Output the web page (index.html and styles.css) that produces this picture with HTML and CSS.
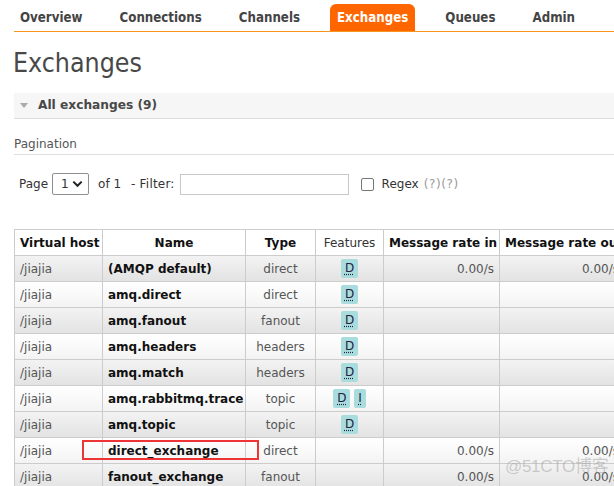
FILE: index.html
```html
<!DOCTYPE html>
<html>
<head>
<meta charset="utf-8">
<link rel="stylesheet" href="styles.css">
</head>
<body>
<div class="page">
  <nav class="tabs">
    <a class="tab">Overview</a>
    <a class="tab">Connections</a>
    <a class="tab">Channels</a>
    <a class="tab active">Exchanges</a>
    <a class="tab">Queues</a>
    <a class="tab">Admin</a>
  </nav>

  <h1 class="title">Exchanges</h1>

  <div class="section-bar"><span class="tri"></span>All exchanges (9)</div>

  <h3 class="sub">Pagination</h3>

  <div class="pager">
    <span>Page</span>
    <span class="select">1<svg width="11" height="8" viewBox="0 0 11 8"><path d="M1.3 1.6 L5.5 5.8 L9.7 1.6" fill="none" stroke="#222" stroke-width="2"/></svg></span>
    <span class="of">of 1</span>
    <span class="filter">- Filter:</span>
    <span class="input"></span>
    <span class="check"></span>
    <span class="regex">Regex</span>
    <span class="help">(?)(?)</span>
  </div>

  <table class="list">
    <colgroup>
      <col class="c1"><col class="c2"><col class="c3"><col class="c4"><col class="c5"><col class="c6">
    </colgroup>
    <thead>
      <tr>
        <th class="l">Virtual host</th>
        <th>Name</th>
        <th>Type</th>
        <th class="norm">Features</th>
        <th>Message rate in</th>
        <th>Message rate out</th>
      </tr>
    </thead>
    <tbody>
      <tr class="alt1"><td>/jiajia</td><td class="name">(AMQP default)</td><td class="c">direct</td><td class="c"><abbr class="badge">D</abbr></td><td class="r">0.00/s</td><td class="r">0.00/s</td></tr>
      <tr class="alt2"><td>/jiajia</td><td class="name">amq.direct</td><td class="c">direct</td><td class="c"><abbr class="badge">D</abbr></td><td></td><td></td></tr>
      <tr class="alt1"><td>/jiajia</td><td class="name">amq.fanout</td><td class="c">fanout</td><td class="c"><abbr class="badge">D</abbr></td><td></td><td></td></tr>
      <tr class="alt2"><td>/jiajia</td><td class="name">amq.headers</td><td class="c">headers</td><td class="c"><abbr class="badge">D</abbr></td><td></td><td></td></tr>
      <tr class="alt1"><td>/jiajia</td><td class="name">amq.match</td><td class="c">headers</td><td class="c"><abbr class="badge">D</abbr></td><td></td><td></td></tr>
      <tr class="alt2"><td>/jiajia</td><td class="name">amq.rabbitmq.trace</td><td class="c">topic</td><td class="c"><abbr class="badge">D</abbr> <abbr class="badge">I</abbr></td><td></td><td></td></tr>
      <tr class="alt1"><td>/jiajia</td><td class="name">amq.topic</td><td class="c">topic</td><td class="c"><abbr class="badge">D</abbr></td><td></td><td></td></tr>
      <tr class="alt2"><td>/jiajia</td><td class="name">direct_exchange</td><td class="c">direct</td><td class="c"></td><td class="r">0.00/s</td><td class="r">0.00/s</td></tr>
      <tr class="alt1"><td>/jiajia</td><td class="name">fanout_exchange</td><td class="c">fanout</td><td class="c"></td><td class="r">0.00/s</td><td class="r">0.00/s</td></tr>
    </tbody>
  </table>

  <div class="redbox"></div>
  <div class="watermark">@51CTO博客</div>
</div>
</body>
</html>
```

FILE: styles.css
```css
html, body {
  margin: 0;
  padding: 0;
  overflow: hidden;
  background: #fff;
}
body {
  width: 614px;
  height: 486px;
  font-family: "DejaVu Sans", Verdana, sans-serif;
  font-size: 12px;
  color: #484848;
}
.page {
  position: relative;
  width: 614px;
  height: 486px;
  overflow: hidden;
}

/* nav */
.tabs {
  display: flex;
  gap: 23px;
  margin: 0 0 0 14px;
  padding-top: 4px;
  border-bottom: 1px solid #f7941d;
}
.tab {
  display: block;
  padding: 0 7px;
  height: 27px;
  line-height: 27px;
  font-family: "DejaVu Sans Condensed", "Liberation Sans", sans-serif;
  font-weight: bold;
  font-size: 13.2px;
  color: #444;
  border-radius: 6px 6px 0 0;
}
.tab:first-child { margin-left: -1px; }
.tab.active {
  background: #ff6600;
  color: #fff;
}

/* title */
.title {
  margin: 16px 0 0 13px;
  font-family: "DejaVu Sans Condensed", "DejaVu Sans", sans-serif;
  font-weight: normal;
  font-size: 26.5px;
  line-height: 30px;
  color: #484848;
}

.section-bar {
  margin: 15px 0 0 14px;
  height: 25px;
  line-height: 25px;
  background: #f6f6f6;
  border-bottom: 1px solid #dddddd;
  font-weight: bold;
  font-size: 12.2px;
  color: #484848;
  display: flex;
  align-items: center;
}
.tri {
  width: 0;
  height: 0;
  margin: 0 10px 0 6px;
  border-left: 4.5px solid transparent;
  border-right: 4.5px solid transparent;
  border-top: 5px solid #aaaaaa;
}

.sub {
  margin: 18px 0 0 14px;
  padding-bottom: 2px;
  line-height: 15px;
  font-size: 12px;
  font-weight: normal;
  color: #555;
  border-bottom: 1px solid #dddddd;
}

.pager {
  margin: 18px 0 0 19px;
  height: 22px;
  display: flex;
  align-items: center;
  color: #333;
}
.select {
  margin-left: 4px;
  width: 37px;
  height: 22px;
  border: 1px solid #8f8f8f;
  border-radius: 2px;
  display: flex;
  align-items: center;
  justify-content: space-between;
  padding: 0 5px 0 8px;
  box-sizing: border-box;
}
.of { margin-left: 9px; }
.filter { margin-left: 10px; letter-spacing: 0.2px; }
.input {
  margin-left: 5px;
  width: 169px;
  height: 21px;
  border: 1px solid #c8c8c8;
  box-sizing: border-box;
}
.check {
  margin: 0 8px 0 12px;
  width: 13px;
  height: 13px;
  border: 1px solid #767676;
  border-radius: 2px;
  box-sizing: border-box;
}
.help {
  margin-left: 5px;
  color: #999;
  letter-spacing: 0.6px;
}

/* table */
.list {
  margin: 34px 0 0 14px;
  border-collapse: collapse;
  table-layout: fixed;
  width: 610px;
}
.c1 { width: 88px; }
.c2 { width: 143px; }
.c3 { width: 70px; }
.c4 { width: 68px; }
.c5 { width: 116px; }
.c6 { width: 125px; }
.list th, .list td {
  border: 1px solid #cccccc;
  height: 25px;
  padding: 0 5px;
  white-space: nowrap;
  overflow: visible;
  vertical-align: middle;
}
.list th {
  background: #fff;
  color: #111;
  font-weight: bold;
  text-align: center;
}
.list th.l { text-align: left; }
.list th.norm { font-weight: normal; color: #333; }
.list td { color: #555; }
.list td.name { font-weight: bold; color: #111; }
.list td.c { text-align: center; }
.list td.r { text-align: right; }
tr.alt1 { background: linear-gradient(#f3f3f3, #e2e2e2); }
tr.alt2 { background: linear-gradient(#ffffff, #f3f3f3); }

.badge {
  display: inline-block;
  padding: 0 4px;
  height: 19px;
  line-height: 19px;
  background: #a9dcdc;
  border-radius: 2px;
  color: #222244;
  text-decoration: underline dotted;
  text-underline-offset: 2px;
}

.redbox {
  position: absolute;
  left: 82px;
  top: 440px;
  width: 177px;
  height: 20px;
  border: 2px solid #ee3535;
  box-sizing: border-box;
}
.watermark {
  position: absolute;
  left: 505px;
  top: 452px;
  font-family: "Liberation Sans", "Noto Sans CJK SC", sans-serif;
  font-size: 17px;
  color: rgba(150, 150, 150, 0.45);
  letter-spacing: -0.3px;
}
```
